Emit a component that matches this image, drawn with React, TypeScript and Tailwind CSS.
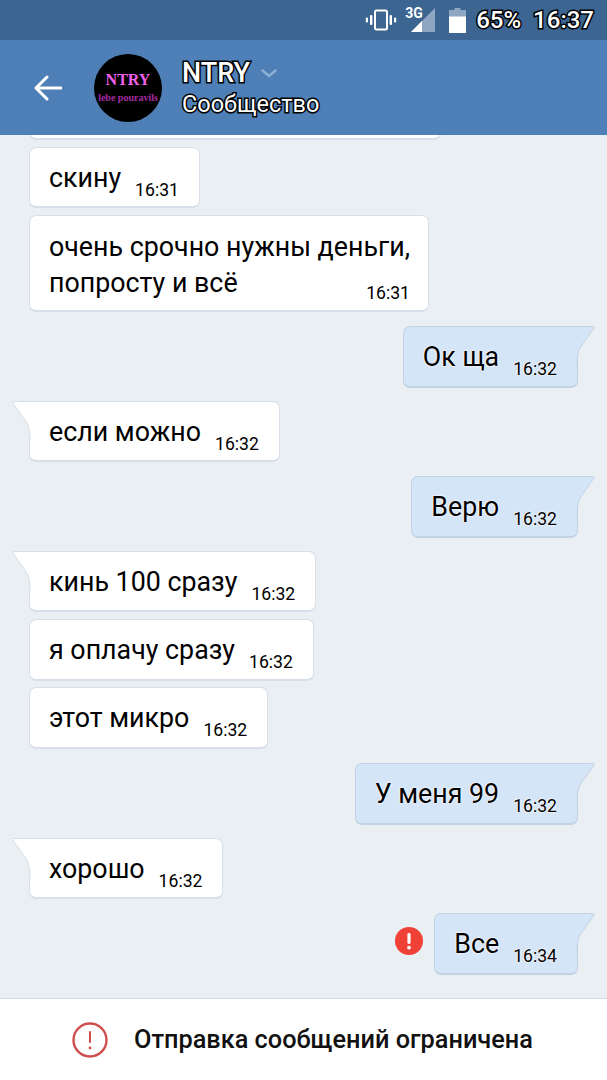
const HALO = "[paint-order:stroke_fill] [-webkit-text-stroke:3px_#000]"

type Msg = { text: string[]; time: string; out?: boolean; tail?: boolean; gap: string; pb: string; error?: boolean }

const MESSAGES: Msg[] = [
  { text: ['скину'], time: '16:31', gap: 'mt-[7px]', pb: 'pb-[10px]' },
  { text: ['очень срочно нужны деньги,', 'попросту и всё'], time: '16:31', gap: 'mt-[7px]', pb: 'pb-[6px]' },
  { text: ['Ок ща'], time: '16:32', out: true, tail: true, gap: 'mt-[14px]', pb: 'pb-[11px]' },
  { text: ['если можно'], time: '16:32', tail: true, gap: 'mt-[13px]', pb: 'pb-[10px]' },
  { text: ['Верю'], time: '16:32', out: true, tail: true, gap: 'mt-[14px]', pb: 'pb-[11px]' },
  { text: ['кинь 100 сразу'], time: '16:32', tail: true, gap: 'mt-[13px]', pb: 'pb-[10px]' },
  { text: ['я оплачу сразу'], time: '16:32', gap: 'mt-[7px]', pb: 'pb-[11px]' },
  { text: ['этот микро'], time: '16:32', gap: 'mt-[6px]', pb: 'pb-[11px]' },
  { text: ['У меня 99'], time: '16:32', out: true, tail: true, gap: 'mt-[14px]', pb: 'pb-[11px]' },
  { text: ['хорошо'], time: '16:32', tail: true, gap: 'mt-[13px]', pb: 'pb-[10px]' },
  { text: ['Все'], time: '16:34', out: true, tail: true, gap: 'mt-[14px]', pb: 'pb-[11px]', error: true },
]

function Tail({ out }: { out?: boolean }) {
  if (out) {
    return (
      <svg viewBox="0 0 19 40" className="absolute -top-px -right-[18px] h-[40px] w-[19px]">
        <path d="M0 0.5 H17 Q19 0.5 18 2 L4 22 Q1 27 1 40 H0 Z" fill="#d5e5f8" />
        <path d="M0 0.5 H17 Q19 0.5 18 2 L4 22 Q1 27 1 40" fill="none" stroke="#c3d3e4" strokeWidth="1" />
      </svg>
    )
  }
  return (
    <svg viewBox="0 0 19 40" className="absolute -top-px -left-[18px] h-[40px] w-[19px]">
      <path d="M19 0.5 H2 Q0 0.5 1 2 L15 22 Q18 27 18 40 H19 Z" fill="#ffffff" />
      <path d="M19 0.5 H2 Q0 0.5 1 2 L15 22 Q18 27 18 40" fill="none" stroke="#d7dfe8" strokeWidth="1" />
    </svg>
  )
}

function Bubble({ msg }: { msg: Msg }) {
  const two = msg.text.length > 1
  const tone = msg.out
    ? 'border-[#c3d3e4] bg-[#d5e5f8] [text-shadow:0_0_2px_#fff,0_0_2px_#fff]'
    : 'border-[#d7dfe8] bg-white'
  const corner = msg.tail ? (msg.out ? 'rounded-tr-none' : 'rounded-tl-none') : ''
  return (
    <div className={`flex items-center ${msg.gap} ${msg.out ? 'justify-end pr-[29px]' : 'pl-[29px]'}`}>
      {msg.error && (
        <svg viewBox="0 0 28 28" className="mr-[11px] -mt-[6px] h-[28px] w-[28px]">
          <circle cx="14" cy="14" r="14" fill="#ef4136" />
          <rect x="12.4" y="6" width="3.2" height="11" rx="1.4" fill="#fff" />
          <circle cx="14" cy="20.6" r="1.9" fill="#fff" />
        </svg>
      )}
      <div
        className={`relative rounded-[7px] border border-b-2 ${tone} ${corner} ${msg.pb} font-['Roboto',sans-serif] text-black ${
          two ? 'flex flex-col pt-[13px] pr-[18px] pl-[19px]' : 'flex items-end pt-[12px] pr-[20px] pl-[19px]'
        }`}
      >
        {msg.tail && <Tail out={msg.out} />}
        <div className="text-[26.8px] leading-[36px] whitespace-nowrap">
          {msg.text.map((line) => (
            <div key={line}>{line}</div>
          ))}
        </div>
        <span
          className={`text-[17.6px] leading-[22px] whitespace-nowrap ${two ? '-mt-[19px] self-end' : 'ml-[14px] translate-y-[5px]'}`}
        >
          {msg.time}
        </span>
      </div>
    </div>
  )
}

function StatusBar() {
  return (
    <div className="flex h-[40px] shrink-0 items-center justify-end bg-[#3c6591] pr-[13px]">
      <svg viewBox="0 0 32 24" className="mr-[8px] h-[24px] w-[32px]">
        <rect x="10" y="2.5" width="12" height="19" rx="1.5" fill="none" stroke="#fff" strokeWidth="2" />
        <rect x="5" y="7" width="2.4" height="10" rx="1" fill="#fff" />
        <rect x="24.6" y="7" width="2.4" height="10" rx="1" fill="#fff" />
        <rect x="0.8" y="9.5" width="2.2" height="5" rx="1" fill="#fff" />
        <rect x="29" y="9.5" width="2.2" height="5" rx="1" fill="#fff" />
      </svg>
      <div className="relative mr-[14px] h-[26px] w-[30px]">
        <span className="absolute -top-[1px] left-0 font-['Roboto',sans-serif] text-[14px] font-bold leading-[14px] text-white">3G</span>
        <svg viewBox="0 0 24 24" className="absolute top-[1px] left-[6px] h-[24px] w-[24px]">
          <path d="M24 0 V24 H0 Z" fill="#8fa6c2" />
          <path d="M11 13 V24 H0 Z" fill="#fff" />
        </svg>
      </div>
      <svg viewBox="0 0 17 25" className="mr-[10px] h-[25px] w-[17px]">
        <path d="M5.5 0 H11.5 V2 H17 V25 H0 V2 H5.5 Z" fill="#8fa6c2" />
        <path d="M0 8.5 H17 V25 H0 Z" fill="#fff" />
      </svg>
      <span className={`font-['Roboto',sans-serif] text-[24px] font-medium leading-none text-white ${HALO}`}>65%</span>
      <span className={`ml-[12px] font-['Roboto',sans-serif] text-[24px] font-medium leading-none text-white ${HALO}`}>16:37</span>
    </div>
  )
}

function Header() {
  return (
    <div className="z-10 flex h-[95px] shrink-0 items-center bg-[#4e7fb6] pl-[34px]">
      <svg viewBox="0 0 28 26" className="h-[26px] w-[28px]">
        <path d="M27 13 H2 M13 2 L2 13 L13 24" fill="none" stroke="#fff" strokeWidth="3" strokeLinecap="round" strokeLinejoin="round" />
      </svg>
      <div className="ml-[32px] flex h-[68px] w-[68px] flex-col items-center justify-center rounded-full bg-black font-['Liberation_Serif',serif] font-bold">
        <span className="text-[16px] leading-[18px] text-[#f060e8]">NTRY</span>
        <span className="mt-[3px] text-[10px] leading-[12px] whitespace-nowrap text-[#a52aa0]">lebe pouravils</span>
      </div>
      <div className="ml-[20px] flex flex-col font-['Roboto',sans-serif] text-white">
        <div className="flex items-center">
          <span className={`text-[27px] font-medium leading-[32px] ${HALO}`}>NTRY</span>
          <svg viewBox="0 0 16 9" className="mt-[2px] ml-[11px] h-[9px] w-[16px]">
            <path d="M1.5 1.5 L8 7 L14.5 1.5" fill="none" stroke="#8fb0d6" strokeWidth="2.4" strokeLinecap="round" strokeLinejoin="round" />
          </svg>
        </div>
        <span className={`text-[23.5px] leading-[30px] ${HALO}`}>Сообщество</span>
      </div>
    </div>
  )
}

export default function App() {
  return (
    <div className="flex h-[1080px] w-[607px] flex-col overflow-hidden bg-[#eaeff4]">
      <StatusBar />
      <Header />
      <div className="flex min-h-0 flex-1 flex-col justify-end overflow-hidden pb-[23px]">
        {/* предыдущее сообщение, видно только нижний край */}
        <div className="ml-[29px] h-[20px] w-[412px] shrink-0 rounded-[7px] border border-b-2 border-[#d7dfe8] bg-white" />
        {MESSAGES.map((m, i) => (
          <Bubble key={i} msg={m} />
        ))}
      </div>
      <div className="flex h-[82px] shrink-0 items-center border-t border-[#cfd8e2] bg-white pl-[72px]">
        <svg viewBox="0 0 36 36" className="h-[36px] w-[36px]">
          <circle cx="18" cy="18" r="16.5" fill="none" stroke="#cf4f4f" strokeWidth="2.4" />
          <rect x="17" y="9" width="2" height="12" rx="1" fill="#cf4f4f" />
          <circle cx="18" cy="26" r="1.4" fill="#cf4f4f" />
        </svg>
        <span className="ml-[26px] font-['Roboto',sans-serif] text-[25.3px] font-medium leading-none text-[#111]">
          Отправка сообщений ограничена
        </span>
      </div>
    </div>
  )
}
